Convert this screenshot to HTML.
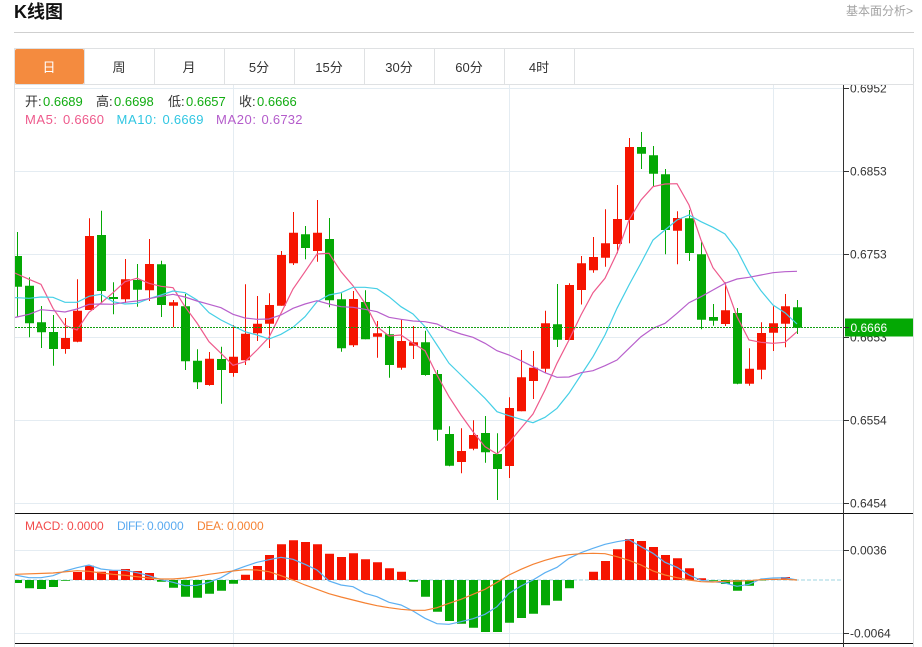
<!DOCTYPE html>
<html lang="zh"><head><meta charset="utf-8"><title>K线图</title>
<style>
html,body{margin:0;padding:0;background:#fff;width:922px;height:647px;overflow:hidden}
svg{display:block;position:absolute;left:0;top:0}
text{font-family:"Liberation Sans","Noto Sans CJK SC",sans-serif;font-size:13px}
</style></head><body>
<svg width="922" height="647" viewBox="0 0 922 647" xmlns="http://www.w3.org/2000/svg">
<defs><clipPath id="c"><rect x="15" y="85" width="828" height="428"/></clipPath><clipPath id="a"><rect x="844" y="85" width="69" height="428"/></clipPath></defs>
<text x="14" y="18" style="font-size:18px;font-weight:700" fill="#111">K线图</text>
<text x="913" y="15" text-anchor="end" style="font-size:12px" fill="#a3a3a3">基本面分析&gt;</text>
<rect x="14" y="32" width="900" height="1" fill="#cfcfcf"/>
<path d="M14.5 647V48.5H913.5V647" fill="none" stroke="#dfe1e3"/>
<path d="M15 84.5H913M84.5 49V84M154.5 49V84M224.5 49V84M294.5 49V84M364.5 49V84M434.5 49V84M504.5 49V84M574.5 49V84" fill="none" stroke="#dfe1e3"/>
<rect x="15" y="49" width="69" height="35" rx="2" fill="#f48b3f"/>
<g text-anchor="middle" fill="#333">
<text x="49" y="72" fill="#fff">日</text><text x="119" y="72">周</text><text x="189" y="72">月</text><text x="259" y="72">5分</text><text x="329" y="72">15分</text><text x="399" y="72">30分</text><text x="469" y="72">60分</text><text x="539" y="72">4时</text>
</g>
<path d="M15 88.5H843M15 171.5H843M15 254.5H843M15 337.5H843M15 420.5H843M15 503.5H843M15 550.5H843M15 633.5H843M233.5 85V647M509.5 85V647M773.5 85V647" fill="none" stroke="#e4ecf2"/>

<g clip-path="url(#c)">
<path fill="#04a804" d="M17 232h1v84.7h-1zM29 277.3h1v60h-1zM41 306h1v42h-1zM53 315h1v50.7h-1zM101 210.7h1v92.3h-1zM113 282.3h1v32h-1zM137 264h1v42.7h-1zM161 260.7h1v56.3h-1zM185 294h1v76h-1zM197 349.3h1v39.7h-1zM221 346.7h1v57h-1zM305 226h1v33.3h-1zM329 218h1v89.3h-1zM341 293.3h1v58.4h-1zM365 290.3h1v49h-1zM389 326h1v51.7h-1zM425 330.7h1v45h-1zM437 370h1v70.7h-1zM449 426.3h1v40h-1zM485 416h1v46.7h-1zM497 433.3h1v66.7h-1zM557 284h1v63h-1zM641 132h1v37h-1zM653 146h1v40.7h-1zM665 169h1v85.3h-1zM689 210h1v51h-1zM701 242h1v87.3h-1zM713 304h1v21.7h-1zM737 308h1v76.3h-1zM797 300h1v34h-1z"/>
<path fill="#f51400" d="M65 318h1v35.7h-1zM77 279.3h1v63h-1zM89 218.3h1v91.7h-1zM125 259h1v44h-1zM149 239h1v62h-1zM173 300h1v27.3h-1zM209 352h1v33.7h-1zM233 325h1v51.7h-1zM245 284.3h1v80.7h-1zM257 296h1v45h-1zM269 293.3h1v54.7h-1zM281 251h1v54.7h-1zM293 212h1v53h-1zM317 200h1v61.7h-1zM353 291h1v56h-1zM377 321h1v36.7h-1zM401 319.3h1v50.4h-1zM413 326h1v33h-1zM461 428.3h1v45h-1zM473 420.3h1v30h-1zM509 397.3h1v80.7h-1zM521 350h1v61.3h-1zM533 351h1v48h-1zM545 310.7h1v62.6h-1zM569 283.3h1v56.7h-1zM581 256h1v48.5h-1zM593 237h1v35.7h-1zM605 209.3h1v57.4h-1zM617 185h1v68.3h-1zM629 138h1v105.3h-1zM677 211.3h1v53h-1zM725 282.3h1v43.7h-1zM749 348.3h1v37.4h-1zM761 322.3h1v57h-1zM773 306.3h1v44.7h-1zM785 294h1v53.3h-1z"/>
<path fill="#04a804" d="M13 256h9v30.7h-9zM25 285.7h9v37.6h-9zM37 322.3h9v10h-9zM49 332h9v17h-9zM97 235h9v56h-9zM109 297h9v2h-9zM133 280h9v9.7h-9zM157 264.3h9v40.7h-9zM181 306.3h9v55h-9zM193 360.7h9v21.6h-9zM217 359h9v11h-9zM301 234.3h9v13.7h-9zM325 239h9v61.3h-9zM337 299.3h9v49h-9zM361 302h9v37.3h-9zM385 334.3h9v30.7h-9zM421 342.3h9v32.7h-9zM433 374h9v55.7h-9zM445 434h9v31.7h-9zM481 433h9v19.3h-9zM493 454h9v15h-9zM553 324.3h9v15.4h-9zM637 147h9v6.7h-9zM649 155.3h9v18.4h-9zM661 174.3h9v55.7h-9zM685 218.3h9v34.7h-9zM697 254.3h9v65.4h-9zM709 317h9v3.7h-9zM733 313h9v70.7h-9zM793 307.3h9v20.4h-9z"/>
<path fill="#f51400" d="M61 338h9v11h-9zM73 310.7h9v31h-9zM85 236h9v74h-9zM121 279.3h9v20h-9zM145 264h9v26.3h-9zM169 302.3h9v3.4h-9zM205 358.7h9v26.3h-9zM229 356.7h9v16.3h-9zM241 333.7h9v26.6h-9zM253 323.7h9v9.6h-9zM265 305h9v18.7h-9zM277 255h9v50.7h-9zM289 232.7h9v30.6h-9zM313 232.7h9v18.3h-9zM349 299h9v46.3h-9zM373 333.3h9v3.4h-9zM397 341h9v26.7h-9zM409 342.3h9v3.4h-9zM457 451h9v11h-9zM469 435h9v13.7h-9zM505 408h9v58h-9zM517 377.3h9v34h-9zM529 367.7h9v13.3h-9zM541 323.3h9v45.4h-9zM565 285h9v55h-9zM577 263.3h9v26.7h-9zM589 257h9v13.3h-9zM601 243.3h9v14.4h-9zM613 219h9v25h-9zM625 147h9v73h-9zM673 218h9v12.7h-9zM721 310.3h9v13.7h-9zM745 368.7h9v15h-9zM757 333h9v36.7h-9zM769 323.3h9v9.4h-9zM781 306.3h9v17.4h-9z"/>
<polyline fill="none" stroke="#ee5a8c" stroke-width="1.2" points="15,273 17,274 29,279.3 41,284.3 53,308.3 65,325.3 77,330 89,312.3 101,303 113,292.7 125,281.7 137,278.3 149,283.3 161,286.3 173,287.7 185,306.7 197,323 209,341.7 221,353.3 233,365.3 245,361.7 257,350 269,337.3 281,313.3 293,289 305,271.7 317,254 329,253.3 341,271.7 353,285.7 365,303.3 377,326.7 389,336 401,335 413,343.3 425,350.7 437,375 449,396.7 461,415 473,431.7 485,446.7 497,454 509,442.7 521,428.3 533,414 545,390 557,363.3 569,340 581,315 593,292.7 605,278.3 617,253 629,220 641,200 653,186.7 665,184 677,183.7 689,205 701,240 713,267.7 725,283.3 737,316.7 749,340 761,342.3 773,343.3 785,342.3 797,331.7"/>
<polyline fill="none" stroke="#45cfe6" stroke-width="1.2" points="15,297.7 17,297.7 29,298.3 41,297 53,297.3 65,302.3 77,302.3 89,296.3 101,294.3 113,301.7 125,304 137,303.3 149,298.7 161,295 173,291 185,292.7 197,300 209,312.7 221,320 233,326 245,331.7 257,335 269,339 281,334.3 293,327.3 305,316.7 317,301.7 329,295 341,292.7 353,287.3 365,287.3 377,288.7 389,296.7 401,306.7 413,314 425,326.7 437,345 449,363.3 461,375 473,386.7 485,398.3 497,411.7 509,415.7 521,419.3 533,422.7 545,417.3 557,408.3 569,393.3 581,375 593,356.7 605,335 617,308.3 629,285 641,263 653,240 665,230 677,220 689,215 701,221.7 713,227.3 725,234 737,250 749,273.3 761,290.7 773,305 785,312.7 797,324"/>
<polyline fill="none" stroke="#b860cc" stroke-width="1.2" points="15,317.5 17,317 29,314.3 41,309.7 53,310.7 65,312 77,309 89,304.3 101,304 113,304.3 125,302.3 137,301 149,298.7 161,296.3 173,294.3 185,297 197,301 209,304.3 221,307.7 233,314.3 245,318 257,319.3 269,319 281,315 293,308.3 305,304 317,300.7 329,304 341,306.7 353,307.3 365,309.3 377,311.7 389,317.3 401,319.3 413,321 425,321.7 437,324 449,330 461,334 473,337.3 485,343.3 497,350.7 509,355 521,360.7 533,366.7 545,372.7 557,377.3 569,377 581,372.7 593,370.7 605,365.7 617,360 629,348.3 641,336.7 653,328.3 665,323.3 677,313.3 689,302.7 701,296.7 713,290 725,283.3 737,279 749,277.3 761,275 773,272.7 785,271.7 797,271.3"/>
<line x1="15" y1="327.5" x2="843" y2="327.5" stroke="#12a012" stroke-dasharray="2 1"/>
</g>

<text x="25" y="106" fill="#333">开:</text><text x="43" y="106" fill="#12ac12">0.6689</text>
<text x="96" y="106" fill="#333">高:</text><text x="114" y="106" fill="#12ac12">0.6698</text>
<text x="168" y="106" fill="#333">低:</text><text x="186" y="106" fill="#12ac12">0.6657</text>
<text x="239" y="106" fill="#333">收:</text><text x="257" y="106" fill="#12ac12">0.6666</text>
<text x="25" y="124" fill="#ee5a8c" textLength="32">MA5:</text><text x="63" y="124" fill="#ee5a8c" textLength="41">0.6660</text>
<text x="116.5" y="124" fill="#30c6e2" textLength="40">MA10:</text><text x="162.5" y="124" fill="#30c6e2" textLength="41">0.6669</text>
<text x="216" y="124" fill="#b45ccb" textLength="40">MA20:</text><text x="261.5" y="124" fill="#b45ccb" textLength="41">0.6732</text>

<path d="M15 513.5H913M15 643.5H913" fill="none" stroke="#111"/>
<line x1="15" y1="580" x2="842" y2="580" stroke="#bfe3ec" stroke-width="1.4" stroke-dasharray="4 2"/>
<path fill="#f51400" d="M73 572h9v8h-9zM85 565.7h9v14.3h-9zM97 571.7h9v8.3h-9zM109 570.7h9v9.3h-9zM121 569h9v11h-9zM133 571h9v9h-9zM145 573h9v7h-9zM241 574.7h9v5.3h-9zM253 566h9v14h-9zM265 555h9v25h-9zM277 544.3h9v35.7h-9zM289 540.3h9v39.7h-9zM301 542h9v38h-9zM313 544.3h9v35.7h-9zM325 553.7h9v26.3h-9zM337 557h9v23h-9zM349 553.3h9v26.7h-9zM361 559.3h9v20.7h-9zM373 562.3h9v17.7h-9zM385 568.3h9v11.7h-9zM397 571.7h9v8.3h-9zM589 571.7h9v8.3h-9zM601 561h9v19h-9zM613 549.3h9v30.7h-9zM625 539h9v41h-9zM637 541h9v39h-9zM649 547h9v33h-9zM661 555h9v25h-9zM673 558.3h9v21.7h-9zM685 568.3h9v11.7h-9zM697 578.3h9v1.7h-9zM769 579h9v1h-9zM781 577h9v3h-9z"/>
<path fill="#04a804" d="M15 580h7v3h-7zM25 580h9v8.3h-9zM37 580h9v9h-9zM49 580h9v7h-9zM61 580h9v.7h-9zM157 580h9v1.7h-9zM169 580h9v7.7h-9zM181 580h9v16.7h-9zM193 580h9v17.7h-9zM205 580h9v13.7h-9zM217 580h9v10.7h-9zM229 580h9v3.7h-9zM409 580h9v1.7h-9zM421 580h9v16.7h-9zM433 580h9v31.7h-9zM445 580h9v41h-9zM457 580h9v43.7h-9zM469 580h9v47.7h-9zM481 580h9v52h-9zM493 580h9v52h-9zM505 580h9v42.7h-9zM517 580h9v38h-9zM529 580h9v33.7h-9zM541 580h9v25.3h-9zM553 580h9v20.7h-9zM565 580h9v8.3h-9zM709 580h9v.7h-9zM721 580h9v4h-9zM733 580h9v10.7h-9zM745 580h9v5.7h-9zM757 580h9v.5h-9z"/>
<polyline fill="none" stroke="#5cb0f2" stroke-width="1.2" points="15,575 29,577.7 41,577.7 53,575.7 65,571 77,567.7 89,565 101,569 113,570.3 125,570.3 137,572.7 149,575.7 161,579.7 173,582.3 185,585.7 197,585.3 209,582.3 221,577.7 233,570.7 245,566.3 257,562.3 269,559.7 281,557.3 293,559.3 305,564.3 317,570 329,581 341,585 353,586.7 365,593.3 377,596.7 389,602.3 401,605 413,611 425,618.3 437,623.7 449,624.3 461,621.7 473,618.7 485,614.3 497,606.7 509,593.3 521,586 533,580 545,572.7 557,567.3 569,558.3 581,552.7 593,548.3 605,544.3 617,541.7 629,539.7 641,546.7 653,553.3 665,562.3 677,567.3 689,575 701,580.3 713,581.7 725,583 737,586.3 749,584.3 761,579 773,578 785,577.7 797,580"/>
<polyline fill="none" stroke="#f58233" stroke-width="1.2" points="15,574.3 53,573 77,570.7 89,571.3 101,573 113,574.3 125,575.3 137,576.7 149,578 161,579 173,579 185,578 197,576.3 209,574.3 221,572.7 233,571 245,569.7 257,570 269,571.7 281,575.7 293,580 305,585 317,589.3 329,593.7 341,597 353,600 365,603 377,605.7 389,607.7 401,609.3 413,610.3 425,610.3 437,607.7 449,603.3 461,599.3 473,594.3 485,589.3 497,582.3 509,575 521,569.3 533,564.3 545,560.3 557,557 569,554.7 581,553.7 593,553.3 605,553.7 617,556.7 629,560.3 641,565 653,571 665,575 677,577.7 689,580 701,581.7 713,582 725,581.3 737,581 749,580.7 761,579.7 773,579.3 785,579.3 797,580"/>
<g style="font-size:12px">
<text x="25" y="530" fill="#f24b4b" style="font-size:12px">MACD:</text><text x="67" y="530" fill="#f24b4b" style="font-size:12px">0.0000</text>
<text x="117" y="530" fill="#5aaaf0" style="font-size:12px" textLength="28">DIFF:</text><text x="147" y="530" fill="#5aaaf0" style="font-size:12px">0.0000</text>
<text x="197" y="530" fill="#f58233" style="font-size:12px" textLength="27">DEA:</text><text x="227" y="530" fill="#f58233" style="font-size:12px">0.0000</text>
</g>

<line x1="843.5" y1="85" x2="843.5" y2="647" stroke="#333"/>
<path d="M844 88.5h5M844 171.5h5M844 254.5h5M844 337.5h5M844 420.5h5M844 503.5h5M844 550.5h5M844 633.5h5" stroke="#333"/>
<g style="font-size:12px" fill="#333">
<g clip-path="url(#a)"><text x="850" y="92.5" style="font-size:12px">0.6952</text></g>
<text x="850" y="175.5" style="font-size:12px">0.6853</text>
<text x="850" y="258.5" style="font-size:12px">0.6753</text>
<text x="850" y="341.5" style="font-size:12px">0.6653</text>
<text x="850" y="424.5" style="font-size:12px">0.6554</text>
<text x="850" y="507.5" style="font-size:12px">0.6454</text>
<text x="850" y="554.5" style="font-size:12px">0.0036</text>
<text x="850" y="637.5" style="font-size:12px">-0.0064</text>
</g>
<rect x="845" y="318.5" width="68" height="18" fill="#04a804"/>
<text x="850.5" y="332" style="font-size:12px" fill="#fff">0.6666</text>
<path d="M844 327.5h5" stroke="#333"/>
</svg>
</body></html>
